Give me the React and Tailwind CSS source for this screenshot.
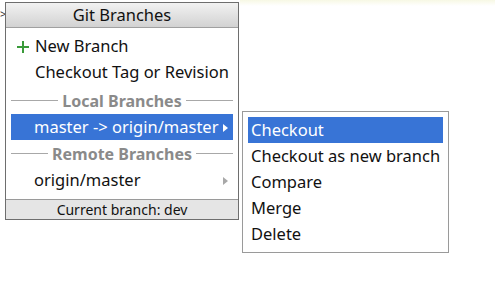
import React from 'react';

const font = { fontFamily: '"Noto Sans", "Open Sans", sans-serif' };

function Separator({ label }) {
  return (
    <div className="flex items-center h-[27px] px-[5px] gap-[4px]">
      <div className="flex-1 h-px bg-[#a8a8a8]" />
      <span className="text-[16px] font-bold text-[#8a8a8a] leading-none">{label}</span>
      <div className="flex-1 h-px bg-[#a8a8a8]" />
    </div>
  );
}

function Arrow({ color }) {
  return (
    <svg width="5" height="8" viewBox="0 0 5 8" className="shrink-0">
      <path d="M0 0 L5 4 L0 8 Z" fill={color} />
    </svg>
  );
}

export default function App() {
  const subItems = ['Checkout', 'Checkout as new branch', 'Compare', 'Merge', 'Delete'];

  return (
    <div className="relative w-[495px] h-[287px] bg-white overflow-hidden" style={font}>
      {/* faint yellow strip at top */}
      <div className="absolute left-[240px] top-0 w-[255px] h-[6px] bg-gradient-to-b from-[#f7f8e4] to-white" />

      {/* little arrow at left edge */}
      <span className="absolute left-0 top-[8px] text-[11px] leading-none text-[#333]">&gt;</span>

      {/* Git Branches popup */}
      <div className="absolute left-[5px] top-[2px] w-[234px] border border-[#6e6e6e] bg-white flex flex-col">
        <div className="h-[25px] flex items-center justify-center border-b border-[#a0a0a0] bg-gradient-to-b from-[#f2f2f2] to-[#d2d2d2] text-[16.5px] text-[#111]">
          Git Branches
        </div>

        <div className="flex flex-col px-[5px] pt-[5px] pb-[2px]">
          <div className="h-[26px] flex items-center text-[16.5px] text-[#111] pt-px">
            <span className="w-[24px] flex justify-center">
              <svg width="12" height="12" viewBox="0 0 12 12">
                <path d="M6 0 V12 M0 6 H12" stroke="#3a9a3a" strokeWidth="2" />
              </svg>
            </span>
            <span>New Branch</span>
          </div>
          <div className="h-[26px] flex items-center text-[16.5px] text-[#111] pl-[24px] pt-px whitespace-nowrap">
            Checkout Tag or Revision
          </div>
        </div>

        <Separator label="Local Branches" />

        <div className="mx-[5px] h-[26px] flex items-center justify-between bg-[#3874d6] text-white text-[16.5px] pl-[23px] pr-[5px] pt-px whitespace-nowrap">
          <span>master -&gt; origin/master</span>
          <Arrow color="#ffffff" />
        </div>

        <Separator label="Remote Branches" />

        <div className="mx-[5px] h-[26px] flex items-center justify-between text-[#111] text-[16.5px] pl-[23px] pr-[5px] mb-[6px] pt-px">
          <span>origin/master</span>
          <Arrow color="#a8a8a8" />
        </div>

        <div className="h-[20px] flex items-center justify-center border-t border-[#9a9a9a] bg-[#e5e5e5] text-[14px] text-[#111]">
          Current branch: dev
        </div>
      </div>

      {/* Submenu */}
      <div className="absolute left-[242px] top-[111px] w-[207px] border border-[#9a9a9a] bg-white px-[5px] py-[5px] flex flex-col">
        {subItems.map((item, i) => (
          <div
            key={item}
            className={`h-[26px] flex items-center px-[3px] pt-px text-[16.5px] whitespace-nowrap ${i === 0 ? 'bg-[#3874d6] text-white' : 'text-[#111]'}`}
          >
            {item}
          </div>
        ))}
      </div>
    </div>
  );
}
